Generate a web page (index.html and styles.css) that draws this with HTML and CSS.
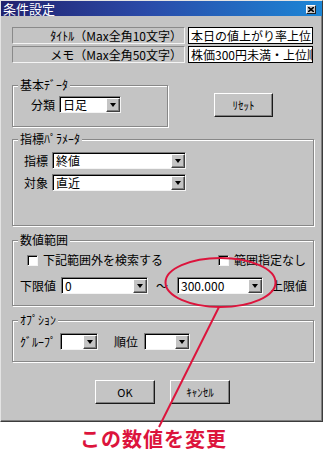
FILE: index.html
```html
<!DOCTYPE html>
<html lang="ja">
  <head>
    <meta charset="UTF-8" />
    <meta name="viewport" content="width=device-width, initial-scale=1.0" />
    <title>条件設定</title>
    <link rel="stylesheet" href="styles.css">
  </head>
  <body>
    <div class="dialog">
      <div class="titlebar">
        <span class="title">条件設定</span>
        <span class="close">
          <svg width="6" height="5" viewBox="0 0 6 5"><path d="M0 0L6 5M6 0L0 5" stroke="#000" stroke-width="1.6"/></svg>
        </span>
      </div>
      <div class="content">
        <div class="field_row first">
          <div class="caption">ﾀｲﾄﾙ（Max全角10文字）</div>
          <div class="text_input">本日の値上がり率上位</div>
        </div>
        <div class="field_row">
          <div class="caption">メモ（Max全角50文字）</div>
          <div class="text_input">株価300円未満・上位順</div>
        </div>

        <div class="basic_row">
          <div class="group basic">
            <div class="legend">基本ﾃﾞｰﾀ</div>
            <div class="line basic_line">
              <span class="label">分類</span>
              <div class="select w_kind"><span class="value">日足</span><span class="arrow"><i></i></span></div>
            </div>
          </div>
          <div class="btn reset">ﾘｾｯﾄ</div>
        </div>

        <div class="group param">
          <div class="legend">指標ﾊﾟﾗﾒｰﾀ</div>
          <div class="line param_line">
            <span class="label">指標</span>
            <div class="select w_param"><span class="value">終値</span><span class="arrow"><i></i></span></div>
          </div>
          <div class="line param_line second">
            <span class="label">対象</span>
            <div class="select w_param"><span class="value">直近</span><span class="arrow"><i></i></span></div>
          </div>
        </div>

        <div class="group range">
          <div class="legend">数値範囲</div>
          <div class="line check_line">
            <label class="check_item"><span class="check"></span>下記範囲外を検索する</label>
            <label class="check_item"><span class="check"></span>範囲指定なし</label>
          </div>
          <div class="line range_line">
            <span class="label">下限値</span>
            <div class="select w_low"><span class="value">0</span><span class="arrow"><i></i></span></div>
            <span class="tilde">～</span>
            <div class="select w_high"><span class="value">300.000</span><span class="arrow"><i></i></span></div>
            <span class="label high_label">上限値</span>
          </div>
        </div>

        <div class="group option">
          <div class="legend">ｵﾌﾟｼｮﾝ</div>
          <div class="line option_line">
            <span class="label">ｸﾞﾙｰﾌﾟ</span>
            <div class="select w_group"><span class="value"></span><span class="arrow"><i></i></span></div>
            <span class="label rank_label">順位</span>
            <div class="select w_rank"><span class="value"></span><span class="arrow"><i></i></span></div>
          </div>
        </div>

        <div class="buttons">
          <div class="btn">OK</div>
          <div class="btn">ｷｬﾝｾﾙ</div>
        </div>
      </div>
    </div>

    <div class="note">この数値を変更</div>

    <!-- 注記の赤い丸と線 -->
    <svg class="mark" width="324" height="452" viewBox="0 0 324 452">
      <ellipse cx="220.5" cy="282.5" rx="55" ry="24.5" fill="none" stroke="#dc143c" stroke-width="2"/>
      <line x1="219" y1="307" x2="159" y2="427" stroke="#dc143c" stroke-width="2"/>
    </svg>
  </body>
</html>
```

FILE: styles.css
```css
body {
  margin: 0;
  background-color: #ffffff;
  font-family: "Noto Sans CJK JP", "Liberation Sans", sans-serif;
  font-size: 12px;
  color: #000000;
  position: relative;
  width: 324px;
}

.dialog {
  width: 323px;
  height: 422px;
  box-sizing: border-box;
  border: 1px solid;
  border-color: #e4e4e4 #3c3c3c #3c3c3c #e4e4e4;
  box-shadow: inset -1px -1px 0 #808080;
  background-color: #c4c4c4;
}

.titlebar {
  height: 15px;
  display: flex;
  align-items: center;
  justify-content: space-between;
  padding: 0 6px 0 2px;
  background: linear-gradient(90deg, #22226e, #2a4aa8 45%, #1c86d6);
}

.title {
  color: #ffffff;
  font-size: 13px;
  line-height: 15px;
}

.close {
  width: 10px;
  height: 9px;
  box-sizing: border-box;
  display: flex;
  align-items: center;
  justify-content: center;
  background-color: #c4c4c4;
  border: 1px solid;
  border-color: #ffffff #202020 #202020 #ffffff;
  margin-top: 1px;
}

.content {
  padding: 0 8px 0 11px;
}

/* タイトル・メモ */
.field_row {
  display: flex;
  height: 17px;
  margin-top: 2px;
}
.field_row.first {
  margin-top: 11px;
}

.caption {
  width: 173px;
  box-sizing: border-box;
  border: 1px solid;
  border-color: #8a8a8a #f4f4f4 #f4f4f4 #8a8a8a;
  text-align: right;
  padding-right: 2px;
  line-height: 15px;
  white-space: nowrap;
}

.text_input {
  width: 125px;
  margin-left: 3px;
  box-sizing: border-box;
  border: 1px solid #000000;
  background-color: #ffffff;
  padding-left: 2px;
  line-height: 15px;
  white-space: nowrap;
  overflow: hidden;
}

/* グループ枠 */
.group {
  box-sizing: border-box;
  border: 1px solid #888888;
  box-shadow: inset 1px 1px 0 #ffffff, 1px 1px 0 #ffffff;
}

.legend {
  width: fit-content;
  margin: -8px 0 0 5px;
  padding: 0 2px;
  height: 14px;
  line-height: 14px;
  background-color: #c4c4c4;
  white-space: nowrap;
}

.line {
  display: flex;
  align-items: center;
  white-space: nowrap;
}

.label {
  line-height: 14px;
}

.basic_row {
  display: flex;
  align-items: flex-start;
  margin-top: 22px;
}

.basic {
  width: 156px;
  height: 42px;
}
.basic_line {
  margin-top: 4px;
  padding-left: 18px;
  gap: 4px;
}

.param {
  margin-top: 12px;
  height: 87px;
}
.param_line {
  margin-top: 6px;
  padding-left: 11px;
  gap: 4px;
}
.param_line.second {
  margin-top: 5px;
}

.range {
  margin-top: 14px;
  height: 66px;
}
.check_line {
  margin-top: 6px;
  height: 14px;
  justify-content: space-between;
  padding: 0 7px 0 14px;
}
.check_item {
  display: flex;
  align-items: center;
  gap: 5px;
  line-height: 14px;
}
.check {
  width: 11px;
  height: 11px;
  box-sizing: border-box;
  background-color: #ffffff;
  border: 1px solid;
  border-color: #808080 #f4f4f4 #f4f4f4 #808080;
  box-shadow: inset 1px 1px 0 #000000;
}
.range_line {
  margin-top: 10px;
  padding-left: 7px;
  gap: 5px;
}
.tilde {
  margin: 0 4px 0 3px;
  line-height: 14px;
}
.high_label {
  margin-left: 3px;
}

.option {
  margin-top: 14px;
  height: 42px;
}
.option_line {
  margin-top: 6px;
  padding-left: 7px;
  gap: 4px;
}
.rank_label {
  margin-left: 12px;
  margin-right: 2px;
}

/* プルダウン */
.select {
  display: flex;
  height: 17px;
  box-sizing: border-box;
  border: 1px solid;
  border-color: #7a7a7a #f4f4f4 #f4f4f4 #7a7a7a;
  background-color: #ffffff;
  box-shadow: inset 1px 1px 0 #000000;
}
.select .value {
  flex: 1;
  padding: 1px 0 0 3px;
  line-height: 14px;
  overflow: hidden;
}
.select .arrow {
  width: 14px;
  margin: 1px 0 0 0;
  box-sizing: border-box;
  display: flex;
  align-items: center;
  justify-content: center;
  background-color: #c4c4c4;
  border: 1px solid;
  border-color: #ffffff #404040 #404040 #ffffff;
  box-shadow: inset -1px -1px 0 #808080;
}
.select .arrow i {
  width: 0;
  height: 0;
  border-left: 3px solid transparent;
  border-right: 3px solid transparent;
  border-top: 4px solid #000000;
}

.w_kind {
  width: 62px;
}
.w_param {
  width: 134px;
}
.w_low {
  width: 87px;
}
.w_high {
  width: 86px;
}
.w_group {
  width: 38px;
}
.w_rank {
  width: 46px;
}

/* ボタン */
.btn {
  width: 60px;
  height: 24px;
  box-sizing: border-box;
  display: flex;
  align-items: center;
  justify-content: center;
  background-color: #c4c4c4;
  border: 1px solid;
  border-color: #ffffff #1a1a1a #1a1a1a #ffffff;
  box-shadow: inset -1px -1px 0 #808080;
  font-size: 11px;
}
.btn.reset {
  width: 59px;
  margin: 8px 0 0 46px;
}

.buttons {
  display: flex;
  gap: 15px;
  margin-top: 18px;
  padding-left: 83px;
}

/* 注記 */
.note {
  margin-top: 7px;
  padding-left: 80px;
  font-size: 20px;
  line-height: 20px;
  font-weight: bold;
  letter-spacing: 1px;
  color: #dc143c;
}

.mark {
  position: absolute;
  left: 0;
  top: 0;
  pointer-events: none;
}
```
